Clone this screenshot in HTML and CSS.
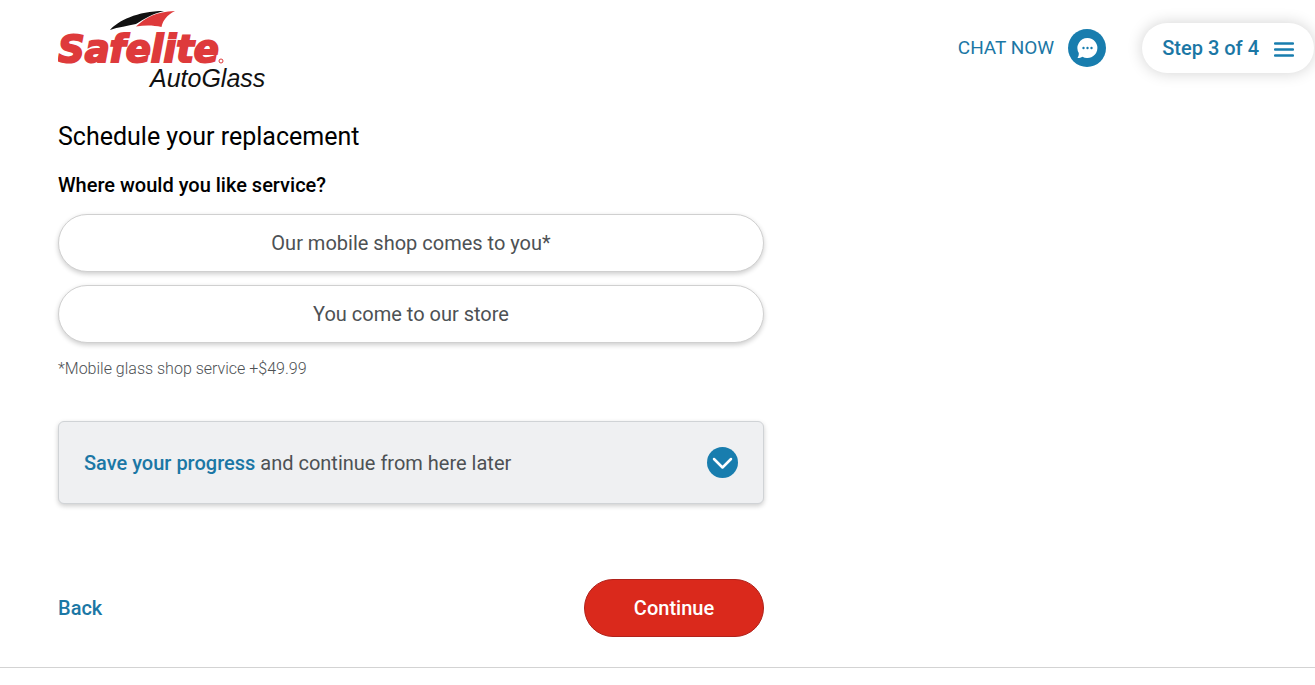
FILE: index.html
```html
<!DOCTYPE html>
<html lang="en">
<head>
<meta charset="utf-8">
<meta name="viewport" content="width=device-width, initial-scale=1">
<title>Schedule your replacement | Safelite AutoGlass</title>
<link rel="stylesheet" href="styles.css">
</head>
<body>
<header class="header">
  <a class="logo" href="#" aria-label="Safelite AutoGlass">
    <svg class="logo-art" viewBox="0 0 210 84" aria-hidden="true">
      <path class="logo-black" d="M52 22C60 13 79 3 106 3C94 6 86 11 78 16C70 18 60 19 52 22Z"/>
      <path class="logo-red" d="M78 18.500C88 9 98 4 117 3C109 7 105 12 103.500 19C95 17 87 17 78 18.500Z"/>
      <text class="logo-name" x="0" y="54">Safelite</text>
      <circle class="logo-mark" cx="163" cy="53" r="2"/>
      <text class="logo-sub" x="92" y="79">AutoGlass</text>
    </svg>
  </a>
  <div class="header-actions">
    <button class="chat" type="button">
      <span class="chat-label">CHAT NOW</span>
      <svg class="chat-icon" viewBox="0 0 38 38" aria-hidden="true">
        <circle class="fill-blue" cx="19" cy="19" r="19"/>
        <path class="fill-white" d="M19.500 9A10 10 0 1 1 14.500 27.700C13 28.700 11 29.100 9.500 29C10.500 27.500 10.800 26 10.800 24A10 10 0 0 1 19.500 9Z"/>
        <circle class="fill-blue" cx="15.500" cy="19" r="1.200"/><circle class="fill-blue" cx="19.500" cy="19" r="1.200"/><circle class="fill-blue" cx="23.500" cy="19" r="1.200"/>
      </svg>
    </button>
    <button class="step" type="button">
      <span>Step 3 of 4</span>
      <svg class="step-icon" viewBox="0 0 20 16" aria-hidden="true"><path d="M1 2.500H19M1 8.500H19M1 14.500H19"/></svg>
    </button>
  </div>
</header>
<main class="main">
  <h1 class="title">Schedule your replacement</h1>
  <h2 class="question">Where would you like service?</h2>
  <div class="options">
    <button class="option" type="button">Our mobile shop comes to you*</button>
    <button class="option" type="button">You come to our store</button>
  </div>
  <p class="note">*Mobile glass shop service +$49.99</p>
  <button class="save" type="button" aria-expanded="false">
    <span><strong class="save-strong">Save your progress</strong> and continue from here later</span>
    <svg class="save-icon" viewBox="0 0 31 31" aria-hidden="true"><circle class="fill-blue" cx="15.500" cy="15.500" r="15.500"/><path class="chevron" d="M7 12L15.500 20.500L24 12"/></svg>
  </button>
  <div class="actions">
    <a class="back" href="#">Back</a>
    <button class="continue" type="button">Continue</button>
  </div>
</main>
<footer class="footer"></footer>
</body>
</html>
```
FILE: styles.css
```css
* { box-sizing: border-box; }
body {
  margin: 0;
  background: #fff;
  color: #000;
  font-family: Roboto, "Liberation Sans", sans-serif;
  font-size: 20px;
  line-height: 24px;
}
button { border: 0; background: none; padding: 0; font: inherit; color: inherit; cursor: pointer; }
a { color: inherit; text-decoration: none; }
svg { display: block; }
.fill-blue { fill: #187dae; }
.fill-white { fill: #fff; }

.header {
  display: flex;
  justify-content: space-between;
  align-items: flex-start;
  padding: 8px 1px 0 58px;
}
.logo-art { width: 210px; height: 84px; }
.logo-black { fill: #111; }
.logo-red, .logo-name { fill: #de3a3b; }
.logo-name { font: italic 700 37px "DejaVu Sans", sans-serif; stroke: #de3a3b; stroke-width: 2; }
.logo-mark { fill: none; stroke: #de3a3b; }
.logo-sub { fill: #111; font: italic 25px "Liberation Sans", sans-serif; }

.header-actions { display: flex; align-items: center; gap: 36px; padding-top: 15px; color: #1b77a5; font-weight: 500; }
.chat { display: flex; align-items: center; gap: 14px; font-size: 19px; font-weight: 400; }
.chat-icon { width: 38px; height: 38px; }
.step {
  display: flex;
  align-items: center;
  gap: 15px;
  height: 50px;
  padding: 0 20px;
  border-radius: 25px;
  background: #fff;
  box-shadow: 0 0 15px rgba(0, 0, 0, .18);
}
.step-icon { width: 20px; height: 16px; margin-top: 2px; fill: none; stroke: #187dae; stroke-width: 2.3; stroke-linecap: round; }

.main { max-width: 764px; padding: 28px 0 30px 58px; }
.title { margin: 0; font-size: 25px; font-weight: 400; line-height: 34px; }
.question { margin: 19px 0 17px; font-size: 20px; font-weight: 500; line-height: 24px; }
.options { display: grid; gap: 13px; }
.option {
  height: 58px;
  border: 1px solid #d0d0d0;
  border-radius: 29px;
  background: #fff;
  color: #4d5154;
  box-shadow: 0 2px 5px rgba(0, 0, 0, .2);
}
.note { margin: 16px 0 0; color: #4d5154; font-size: 16px; font-weight: 300; line-height: 20px; }
.save {
  display: flex;
  justify-content: space-between;
  align-items: center;
  width: 100%;
  height: 83px;
  margin-top: 42px;
  padding: 0 25px;
  border: 1px solid #d0d3d6;
  border-radius: 6px;
  background: #eff0f2;
  color: #4d5154;
  box-shadow: 0 2px 5px rgba(0, 0, 0, .2);
}
.save-strong { color: #1b77a5; font-weight: 500; }
.save-icon { width: 31px; height: 31px; }
.chevron { fill: none; stroke: #fff; stroke-width: 2.5; stroke-linecap: round; stroke-linejoin: round; }
.actions { display: flex; justify-content: space-between; align-items: center; margin-top: 75px; }
.back { color: #1b77a5; font-weight: 500; }
.continue {
  width: 180px;
  height: 58px;
  border: 1px solid #b0221b;
  border-radius: 29px;
  background: #da291c;
  color: #fff;
  font-weight: 500;
}
.footer { border-top: 1px solid #d3d3d3; }
```
